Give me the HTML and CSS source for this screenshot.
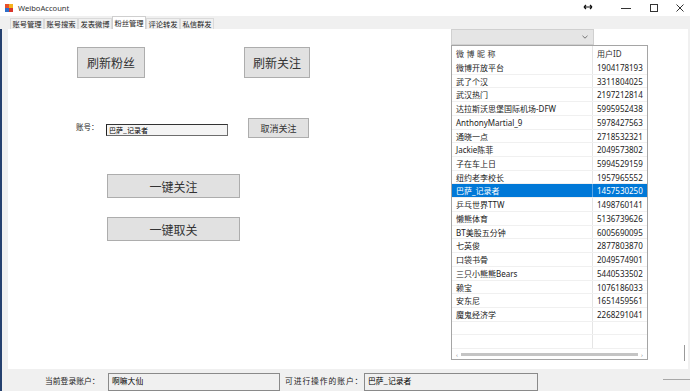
FILE: index.html
```html
<!DOCTYPE html>
<html lang="zh-CN">
<head>
  <meta charset="UTF-8" />
  <title>WeiboAccount</title>
  <link rel="stylesheet" href="styles.css">
</head>
<body>
  <header class="titlebar">
    <svg class="app-icon" viewBox="0 0 8 8">
      <rect x="0" y="0" width="4" height="4" fill="#e8502a" />
      <rect x="4" y="0" width="4" height="4" fill="#f6b21b" />
      <rect x="0" y="4" width="4" height="4" fill="#2f6fc9" />
      <rect x="4" y="4" width="4" height="4" fill="#d9352b" />
    </svg>
    <span class="title">WeiboAccount</span>
    <svg class="resize" viewBox="0 0 10 6">
      <path d="M1 3h8M1 3l2-2M1 3l2 2M9 3l-2-2M9 3l-2 2" stroke="#111" stroke-width="1.2" fill="none" />
    </svg>
    <svg class="cap cap-min" viewBox="0 0 20 10"><path d="M5 5.5h10" stroke="#333" stroke-width="1" /></svg>
    <svg class="cap cap-max" viewBox="0 0 20 10"><rect x="6.5" y="1.5" width="7" height="7" stroke="#333" stroke-width="1" fill="none" /></svg>
    <svg class="cap cap-close" viewBox="0 0 20 10"><path d="M6.5 1.5l7 7M13.5 1.5l-7 7" stroke="#333" stroke-width="1" /></svg>
  </header>

  <nav class="tabs">
    <span class="tab">账号管理</span>
    <span class="tab">账号搜索</span>
    <span class="tab">发表微博</span>
    <span class="tab active">粉丝管理</span>
    <span class="tab">评论转发</span>
    <span class="tab">私信群发</span>
  </nav>

  <div class="frame">
    <main class="page">
      <section class="left-pane">
        <div class="refresh-row">
          <button class="btn btn-big btn-fans">刷新粉丝</button>
          <button class="btn btn-big btn-follow">刷新关注</button>
        </div>

        <div class="account-row">
          <label class="field-label">账号：</label>
          <div class="textbox">巴萨_记录者</div>
          <button class="btn btn-small">取消关注</button>
        </div>

        <button class="btn btn-wide btn-first">一键关注</button>
        <button class="btn btn-wide btn-second">一键取关</button>
      </section>

      <section class="right-pane">
        <div class="list-col">
          <div class="combo">
            <svg class="chevron" viewBox="0 0 6 4"><path d="M0.5 0.8l2.5 2.4 2.5-2.4" stroke="#555" stroke-width="0.8" fill="none" /></svg>
          </div>
          <div class="listview">
            <div class="lv-row lv-head">
              <span class="c1 spaced">微博昵称</span>
              <span class="c2">用户ID</span>
            </div>
            <div class="lv-body">
              <div class="lv-row"><span class="c1">微博开放平台</span><span class="c2">1904178193</span></div>
              <div class="lv-row"><span class="c1">武了个汉</span><span class="c2">3311804025</span></div>
              <div class="lv-row"><span class="c1">武汉热门</span><span class="c2">2197212814</span></div>
              <div class="lv-row"><span class="c1">达拉斯沃思堡国际机场-DFW</span><span class="c2">5995952438</span></div>
              <div class="lv-row"><span class="c1">AnthonyMartial_9</span><span class="c2">5978427563</span></div>
              <div class="lv-row"><span class="c1">通晓一点</span><span class="c2">2718532321</span></div>
              <div class="lv-row"><span class="c1">Jackie陈菲</span><span class="c2">2049573802</span></div>
              <div class="lv-row"><span class="c1">子在车上日</span><span class="c2">5994529159</span></div>
              <div class="lv-row"><span class="c1">纽约老李校长</span><span class="c2">1957965552</span></div>
              <div class="lv-row selected"><span class="c1">巴萨_记录者</span><span class="c2">1457530250</span></div>
              <div class="lv-row"><span class="c1">乒乓世界TTW</span><span class="c2">1498760141</span></div>
              <div class="lv-row"><span class="c1">懒熊体育</span><span class="c2">5136739626</span></div>
              <div class="lv-row"><span class="c1">BT美股五分钟</span><span class="c2">6005690095</span></div>
              <div class="lv-row"><span class="c1">七英俊</span><span class="c2">2877803870</span></div>
              <div class="lv-row"><span class="c1">口袋书骨</span><span class="c2">2049574901</span></div>
              <div class="lv-row"><span class="c1">三只小熊熊Bears</span><span class="c2">5440533502</span></div>
              <div class="lv-row"><span class="c1">赖宝</span><span class="c2">1076186033</span></div>
              <div class="lv-row"><span class="c1">安东尼</span><span class="c2">1651459561</span></div>
              <div class="lv-row"><span class="c1">魔鬼经济学</span><span class="c2">2268291041</span></div>
              <div class="lv-row"><span class="c1"></span><span class="c2"></span></div>
              <div class="lv-row"><span class="c1"></span><span class="c2"></span></div>
            </div>
            <div class="hscroll">
              <span class="arrow">‹</span>
              <span class="thumb"></span>
              <span class="arrow">›</span>
            </div>
          </div>
        </div>
        <div class="side-space">
          <span class="grip"></span>
        </div>
      </section>
    </main>

    <footer class="statusbar">
      <span class="status-label first">当前登录账户：</span>
      <div class="status-box box-login">啊嘛大仙</div>
      <span class="status-label second">可进行操作的账户：</span>
      <div class="status-box box-target">巴萨_记录者</div>
      <span class="status-rule"></span>
    </footer>
  </div>
</body>
</html>
```

FILE: styles.css
```css
* {
  box-sizing: border-box;
}

body {
  margin: 0;
  width: 690px;
  height: 391px;
  overflow: hidden;
  background: #fff;
  color: #000;
  font-family: "Noto Sans", "Noto Sans CJK SC", sans-serif;
}

/* title bar */
.titlebar {
  height: 16px;
  display: flex;
  align-items: center;
  padding-left: 5px;
  background: #fff;
}

.app-icon {
  width: 8px;
  height: 8px;
  margin-right: 5px;
}

.title {
  flex: 1;
  font-size: 7.6px;
  color: #333;
}

.resize {
  width: 10px;
  height: 6px;
  margin-right: 23px;
  margin-top: -3px;
}

.cap {
  width: 20px;
  height: 10px;
}

.cap-max {
  margin-left: 8px;
}

.cap-close {
  margin-left: 6px;
}

/* tabs */
.tabs {
  height: 13px;
  display: flex;
  align-items: flex-end;
  padding-left: 10px;
  background: #f0f0f0;
}

.tab {
  width: 34px;
  height: 11px;
  font-size: 7.3px;
  line-height: 11px;
  text-align: center;
  border: 1px solid #dadada;
  border-bottom: none;
  color: #222;
  white-space: nowrap;
}

.tab.active {
  height: 13px;
  line-height: 13px;
  background: #fff;
  border-color: #cfcfcf;
}

/* frame */
.frame {
  height: 362px;
  display: flex;
  flex-direction: column;
  border-left: 2px solid #25416f;
  padding-left: 6px;
  background: #f0f0f0;
}

.page {
  height: 343px;
  width: 680px;
  display: flex;
  background: #fff;
}

/* left panel */
.left-pane {
  width: 443px;
  display: flex;
  flex-direction: column;
  align-items: flex-start;
}

.btn {
  font-family: "Noto Sans CJK SC", sans-serif;
  background: #e1e1e1;
  border: 1px solid #adadad;
  color: #333;
  padding: 0;
  cursor: pointer;
}

.refresh-row {
  display: flex;
  margin-top: 18px;
  padding-left: 69px;
}

.btn-big {
  height: 31px;
  font-size: 12px;
}

.btn-fans {
  width: 68px;
}

.btn-follow {
  width: 66px;
  margin-left: 99px;
}

.account-row {
  display: flex;
  align-items: center;
  margin-top: 40px;
  padding-left: 68px;
}

.field-label {
  width: 30px;
  font-size: 7.5px;
  font-family: "Noto Sans CJK SC", sans-serif;
  color: #222;
  margin-top: -3px;
}

.textbox {
  width: 122px;
  height: 12px;
  margin-top: 3px;
  border: 1px solid #6d6d6d;
  border-left-color: #222;
  border-top-color: #333;
  background: #f4f4f4;
  font-size: 7px;
  line-height: 10px;
  padding-left: 2px;
  font-family: "Noto Sans CJK SC", sans-serif;
}

.btn-small {
  width: 61px;
  height: 20px;
  margin-left: 20px;
  font-size: 9px;
}

.btn-wide {
  width: 133px;
  height: 24px;
  margin-left: 99px;
  font-size: 12px;
}

.btn-first {
  margin-top: 36px;
}

.btn-second {
  margin-top: 19px;
}

/* right panel */
.right-pane {
  flex: 1;
  display: flex;
}

.list-col {
  width: 197px;
  display: flex;
  flex-direction: column;
}

.combo {
  width: 143px;
  height: 16px;
  background: #e5e5e5;
  border: 1px solid #d0d0d0;
  display: flex;
  align-items: center;
  justify-content: flex-end;
  padding-right: 5px;
}

.chevron {
  width: 6px;
  height: 4px;
}

.listview {
  height: 315px;
  border: 1px solid #a5a5a5;
  display: flex;
  flex-direction: column;
  font-size: 8px;
  font-family: "Noto Sans", "Noto Sans CJK SC", sans-serif;
}

.lv-row {
  display: flex;
  height: 13.72px;
  line-height: 13px;
  border-bottom: 1px solid #f0f0f0;
  color: #222;
  white-space: nowrap;
}

.lv-head {
  height: 15px;
  line-height: 15px;
  border-bottom: none;
  color: #333;
}

.c1 {
  width: 141px;
  padding-left: 4px;
  border-right: 1px solid #e5e5e5;
  overflow: hidden;
}

.c2 {
  flex: 1;
  padding-left: 4px;
}

.spaced {
  letter-spacing: 2.5px;
}

.lv-body {
  flex: 1;
  overflow: hidden;
}

.lv-row.selected {
  background: #0078d7;
  color: #fff;
}

.lv-row.selected .c1 {
  border-right-color: #5aa5e6;
}

.hscroll {
  height: 9px;
  display: flex;
  align-items: center;
  padding: 0 2px;
}

.arrow {
  width: 6px;
  font-size: 6px;
  line-height: 6px;
  color: #888;
  text-align: center;
}

.thumb {
  flex: 1;
  height: 3px;
  background: #c4c4c4;
  margin: 0 1px;
}

.side-space {
  flex: 1;
  display: flex;
  align-items: flex-end;
  justify-content: flex-end;
  padding: 0 3px 8px 0;
}

.grip {
  width: 1px;
  height: 16px;
  background: #9a9a9a;
}

/* status bar */
.statusbar {
  flex: 1;
  display: flex;
  align-items: flex-start;
  padding-top: 4px;
  font-family: "Noto Sans CJK SC", sans-serif;
  font-size: 7.8px;
}

.status-label {
  line-height: 16px;
  color: #222;
}

.status-label.first {
  margin-left: 37px;
  width: 63px;
}

.status-label.second {
  width: 79px;
  letter-spacing: 0.9px;
}

.status-box {
  height: 18px;
  border: 1px solid #8a8a8a;
  background: #f0f0f0;
  padding-left: 3px;
  line-height: 14px;
}

.box-login {
  width: 172px;
  margin-right: 5px;
}

.box-target {
  width: 174px;
}

.status-rule {
  margin-left: auto;
  margin-top: 6px;
  width: 27px;
  border-top: 1px solid #a8a8a8;
}
```
